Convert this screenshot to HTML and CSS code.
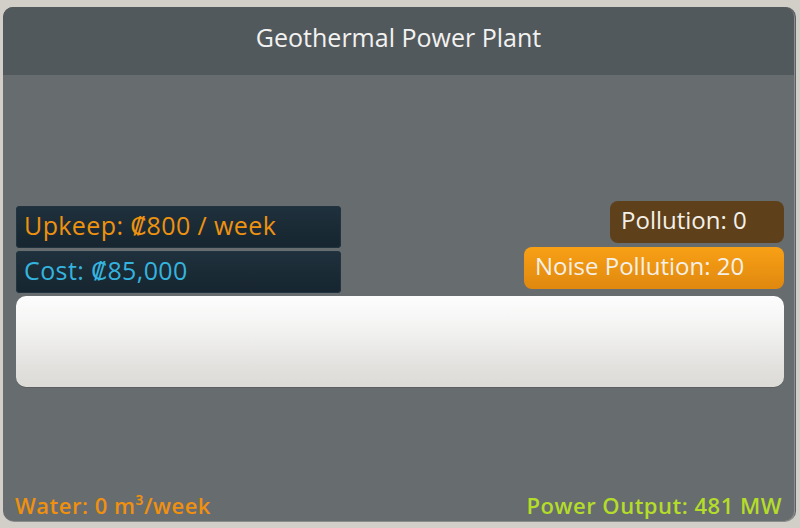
FILE: index.html
```html
<!DOCTYPE html>
<html lang="en">
<head>
    <meta charset="UTF-8">
    <title>Geothermal Power Plant</title>
    <link rel="stylesheet" href="styles.css">
</head>
<body>
    <div class="panel">
        <div class="panel-header">
            <h1>Geothermal Power Plant</h1>
        </div>

        <div class="panel-body">
            <div class="stats">
                <div class="costs">
                    <div class="cost-item upkeep">Upkeep: ₡800 / week</div>
                    <div class="cost-item price">Cost: ₡85,000</div>
                </div>
                <div class="pollution-group">
                    <div class="badge pollution">Pollution: 0</div>
                    <div class="badge noise">Noise Pollution: 20</div>
                </div>
            </div>

            <div class="description"></div>
        </div>

        <div class="panel-footer">
            <span class="water">Water: 0 m³/week</span>
            <span class="power">Power Output: 481 MW</span>
        </div>
    </div>
</body>
</html>
```

FILE: styles.css
```css
body {
    font-family: 'Open Sans', 'DejaVu Sans', sans-serif;
    background-color: #d2cec8;
    margin: 0;
    padding: 7px 6px 0 3px;
    height: 528px;
    box-sizing: border-box;
    overflow: hidden;
}

.panel {
    height: 514px;
    background-color: #676c6e;
    border-radius: 10px;
    box-shadow: 1px 1px 0 #8a8d8c, 2px 0 0 #5c6062;
    display: flex;
    flex-direction: column;
    overflow: hidden;
}

.panel-header {
    height: 68px;
    background-color: #52595d;
    display: flex;
    justify-content: center;
    padding-top: 14px;
    box-sizing: border-box;
}

h1 {
    margin: 0;
    font-size: 25px;
    font-weight: 400;
    color: #f2f2f0;
    line-height: 32px;
}

.panel-body {
    flex: 1;
    padding: 126px 10px 0 13px;
}

.stats {
    display: flex;
    justify-content: space-between;
}

.costs {
    margin-top: 5px;
    display: flex;
    flex-direction: column;
    gap: 3px;
    width: 325px;
}

.cost-item {
    height: 42px;
    background: linear-gradient(#1f313d, #16252f);
    border-radius: 4px;
    padding-left: 8px;
    font-size: 25px;
    letter-spacing: 0.4px;
    line-height: 38px;
    box-shadow: inset 0 0 0 1px #22343f;
}

.upkeep {
    color: #ee920f;
}

.price {
    color: #35b3df;
}

.pollution-group {
    display: flex;
    flex-direction: column;
    align-items: flex-end;
    gap: 4px;
}

.badge {
    height: 42px;
    border-radius: 8px;
    padding: 0 30px 0 11px;
    box-sizing: border-box;
    font-size: 24px;
    line-height: 38px;
    color: #f4f0e8;
}

.pollution {
    width: 174px;
    background-color: #5e401b;
}

.noise {
    width: 260px;
    background: linear-gradient(#f8a015, #e0880f);
}

.description {
    margin-top: 3px;
    height: 91px;
    border-radius: 10px;
    background: linear-gradient(#fdfdfd 0%, #f3f3f2 35%, #e1e0dd 80%, #dddbd6 100%);
    box-shadow: 0 1px 0 #5a5e60;
}

.panel-footer {
    display: flex;
    justify-content: space-between;
    align-items: baseline;
    padding: 0 12px 2px 12px;
    font-size: 22px;
    font-weight: 600;
    letter-spacing: 0.5px;
    line-height: 28px;
}

.water {
    color: #f0900f;
}

.power {
    color: #b4dc2a;
}
```
